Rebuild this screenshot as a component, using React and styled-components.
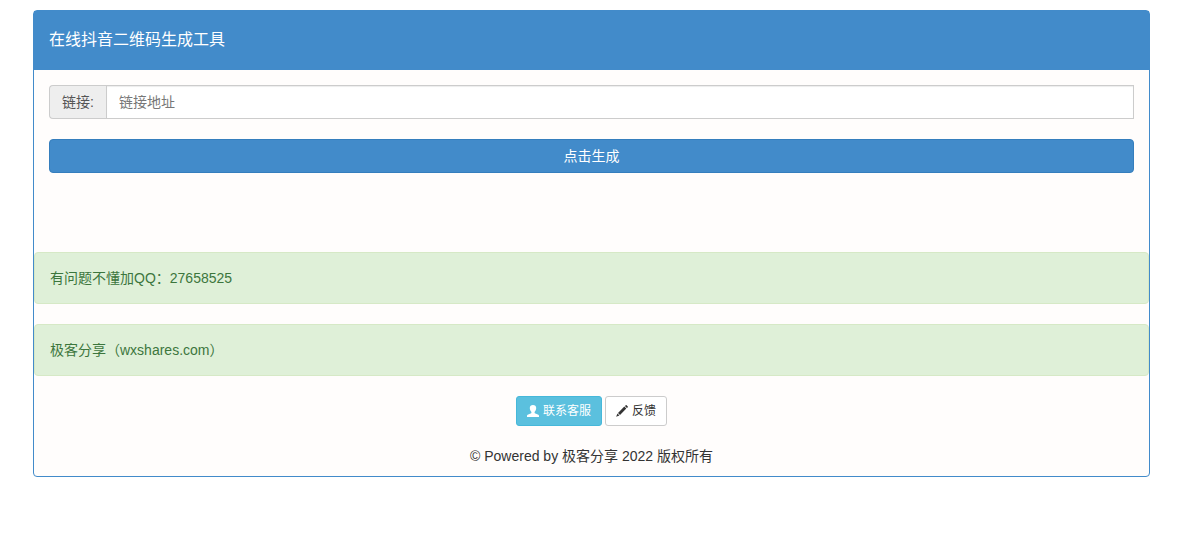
import React, { useState } from 'react'
import styled, { createGlobalStyle, css } from 'styled-components';

const GlobalStyle = createGlobalStyle`
  * {
    box-sizing: border-box;
  }
  body {
    margin: 0;
    background: #fff;
    color: #333;
    font-family: "Liberation Sans", Arial, "Noto Sans CJK SC", sans-serif;
    font-size: 14px;
    line-height: 20px;
  }
`

const Page = styled.div`
  padding: 10px 42px 20px 33px;
`

const Panel = styled.main`
  background-color: #fffdfc;
  border: 1px solid #428bca;
  border-radius: 4px;
`

const PanelHeading = styled.header`
  padding: 19px 15px 20px;
  background-color: #428bca;
  color: #fff;
`

const PanelTitle = styled.h1`
  margin: 0;
  font-size: 16px;
  font-weight: 400;
  line-height: 20px;
`

const PanelBody = styled.form`
  display: flex;
  flex-direction: column;
  gap: 20px;
  padding: 15px 15px 79px;
`

const InputGroup = styled.div`
  display: flex;
  height: 34px;
`

const Addon = styled.label`
  padding: 6px 12px;
  background-color: #eee;
  border: 1px solid #ccc;
  border-right: 0;
  border-radius: 4px 0 0 4px;
  color: #555;
`

const TextInput = styled.input`
  flex: 1;
  min-width: 0;
  padding: 6px 12px;
  background-color: #fff;
  border: 1px solid #ccc;
  border-radius: 0;
  box-shadow: inset 0 1px 1px rgba(0, 0, 0, 0.075);
  color: #555;
  font: inherit;

  &::placeholder {
    color: #777;
  }
  &:focus {
    border-color: #66afe9;
    outline: 0;
  }
`

const variants = {
  primary: css`
    background-color: #428bca;
    border-color: #357ebd;
    color: #fff;
  `,
  info: css`
    background-color: #5bc0de;
    border-color: #46b8da;
    color: #fff;
  `,
  default: css`
    background-color: #fff;
    border-color: #ccc;
    color: #333;
  `,
}

const Button = styled.button`
  display: flex;
  align-items: center;
  justify-content: center;
  gap: 4px;
  padding: ${({ $small }) => ($small ? '5px 10px' : '6px 12px')};
  border: 1px solid transparent;
  border-radius: ${({ $small }) => ($small ? '3px' : '4px')};
  font-family: inherit;
  font-size: ${({ $small }) => ($small ? '12px' : '14px')};
  line-height: ${({ $small }) => ($small ? '18px' : '20px')};
  cursor: pointer;
  ${({ $variant }) => variants[$variant]}
`

const Alert = styled.div`
  margin-bottom: 20px;
  padding: 15px;
  background-color: #dff0d8;
  border: 1px solid #d6e9c6;
  border-radius: 4px;
  color: #3c763d;
`

const Actions = styled.div`
  display: flex;
  justify-content: center;
  gap: 3px;
`

const Copyright = styled.footer`
  padding: 20px 15px 10px;
  text-align: center;
`

const Icon = styled.svg`
  width: 12px;
  height: 12px;
  fill: currentColor;
`

const UserIcon = () => (
  <Icon viewBox="0 0 12 12" aria-hidden="true">
    <path d="M6 0C4 0 2.800 1.100 2.800 3C2.800 4.500 3.400 6 4.400 6.900V7.700C4.400 8.200 4.100 8.400 3.600 8.600L1.200 9.500C.4 9.800 0 10.200 0 11V12H12V11C12 10.200 11.600 9.800 10.800 9.500L8.400 8.600C7.900 8.400 7.600 8.200 7.600 7.700V6.900C8.600 6 9.200 4.500 9.200 3C9.200 1.100 8 0 6 0Z" />
  </Icon>
)

const PencilIcon = () => (
  <Icon viewBox="0 0 12 12" aria-hidden="true">
    <path d="M9.800.2Q10.200-.1 10.600.2L11.800 1.400Q12.100 1.800 11.800 2.200L10.900 3.100L8.900 1.100ZM8.300 1.600L10.300 3.600L4 9.900L2 7.900ZM1.500 8.500L3.400 10.400L.1 11.800Z" />
  </Icon>
)

const notices = ['有问题不懂加QQ：27658525', '极客分享（wxshares.com）']

const App = () => {
  const [link, setLink] = useState('');

  return (
    <Page>
      <GlobalStyle />
      <Panel>
        <PanelHeading>
          <PanelTitle>在线抖音二维码生成工具</PanelTitle>
        </PanelHeading>
        <PanelBody onSubmit={(e) => e.preventDefault()}>
          <InputGroup>
            <Addon htmlFor="link">链接:</Addon>
            <TextInput
              id="link"
              type="text"
              placeholder="链接地址"
              value={link}
              onChange={(e) => setLink(e.target.value)}
            />
          </InputGroup>
          <Button type="submit" $variant="primary">点击生成</Button>
        </PanelBody>
        {notices.map((notice) => (
          <Alert key={notice}>{notice}</Alert>
        ))}
        <Actions>
          <Button type="button" $variant="info" $small>
            <UserIcon />
            联系客服
          </Button>
          <Button type="button" $variant="default" $small>
            <PencilIcon />
            反馈
          </Button>
        </Actions>
        <Copyright>© Powered by 极客分享 2022 版权所有</Copyright>
      </Panel>
    </Page>
  )
}

export default App;
